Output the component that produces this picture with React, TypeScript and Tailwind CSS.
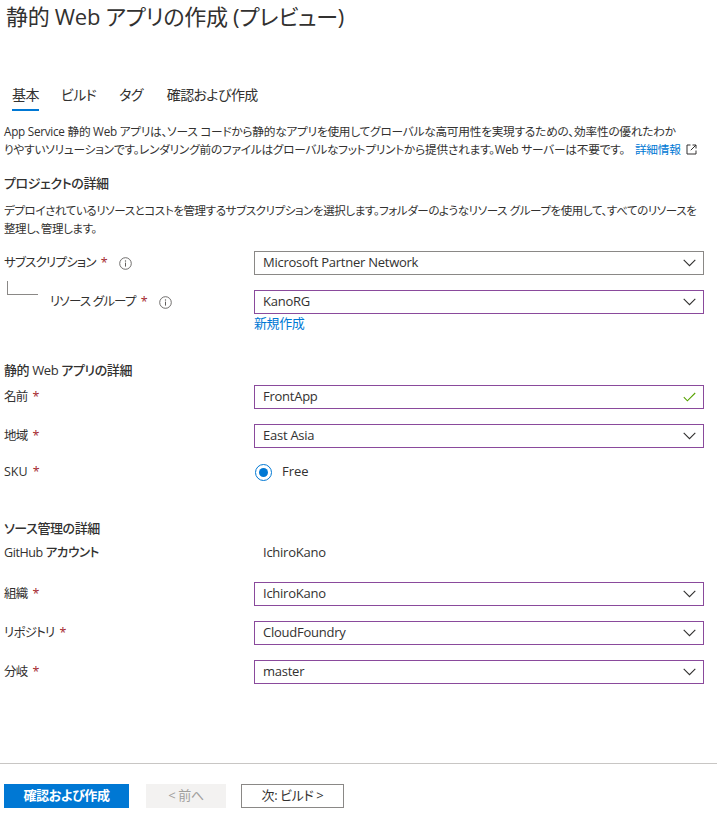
import React from "react";

const FONT = "font-['Segoe_UI','Open_Sans','Noto_Sans_CJK_JP',sans-serif] [font-feature-settings:'palt']";

function Chevron() {
  return (
    <svg width="13" height="8" viewBox="0 0 13 8" className="shrink-0">
      <path d="M0.7 0.9 L6.5 6.7 L12.3 0.9" fill="none" stroke="#323130" strokeWidth="1.1" />
    </svg>
  );
}

function Check() {
  return (
    <svg width="13" height="10" viewBox="0 0 13 10" className="shrink-0">
      <path d="M0.8 5.2 L4.4 8.8 L12.2 1" fill="none" stroke="#57a300" strokeWidth="1.1" />
    </svg>
  );
}

function InfoIcon() {
  return (
    <svg width="13" height="13" viewBox="0 0 13 13" className="shrink-0">
      <circle cx="6.5" cy="6.5" r="5.8" fill="none" stroke="#605e5c" strokeWidth="0.9" />
      <circle cx="6.5" cy="4" r="0.7" fill="#605e5c" />
      <path d="M6.5 5.6 V9.6" stroke="#605e5c" strokeWidth="1" />
    </svg>
  );
}

function ExternalIcon() {
  return (
    <svg width="11" height="11" viewBox="0 0 11 11" className="inline-block align-[-1px] ml-[5px]">
      <path d="M4.5 1 H1 V10 H10 V6.5" fill="none" stroke="#323130" strokeWidth="1" />
      <path d="M6.5 1 H10 V4.5 M10 1 L4.8 6.2" fill="none" stroke="#323130" strokeWidth="1" />
    </svg>
  );
}

function Star() {
  return <span className="text-[#a4262c] ml-[5px] tracking-normal">*</span>;
}

function Field({
  value,
  purple = true,
  icon = "chevron",
}: {
  value: string;
  purple?: boolean;
  icon?: "chevron" | "check";
}) {
  return (
    <div
      className={`w-[450px] h-[24px] flex items-center justify-between pl-[8px] pr-[7px] border ${
        purple ? "border-[#8a4a9c]" : "border-[#8a8886]"
      } bg-white text-[13px] tracking-[-0.25px] text-[#323130]`}
    >
      <span>{value}</span>
      {icon === "chevron" ? <Chevron /> : <Check />}
    </div>
  );
}

function Row({
  label,
  children,
  className = "",
}: {
  label: React.ReactNode;
  children: React.ReactNode;
  className?: string;
}) {
  return (
    <div className={`flex items-center ${className}`}>
      <div className="w-[250px] flex items-center text-[12.5px] tracking-[-0.8px] text-[#323130]">{label}</div>
      {children}
    </div>
  );
}

export default function App() {
  return (
    <div className={`${FONT} w-[717px] h-[816px] bg-white text-[#323130] pl-[4px] overflow-hidden`}>
      <h1 className="text-[22px] leading-[32px] font-normal pl-[2px] tracking-[-0.3px] text-[#323130]">
        静的 Web アプリの作成 (プレビュー)
      </h1>

      {/* tabs */}
      <div className="flex mt-[53px] pl-[8px] text-[14px] leading-[20px] tracking-[-0.6px]">
        <div className="flex flex-col">
          <span>基本</span>
          <span className="mt-[4px] h-[2px] bg-[#0078d4]" />
        </div>
        <span className="ml-[22px]">ビルド</span>
        <span className="ml-[23px]">タグ</span>
        <span className="ml-[24px]">確認および作成</span>
      </div>

      <p className="mt-[11px] text-[11.7px] leading-[18px] tracking-[-0.25px] whitespace-nowrap">
        App Service 静的 Web アプリは、ソース コードから静的なアプリを使用してグローバルな高可用性を実現するための、効率性の優れたわか
        <br />
        りやすいソリューションです。レンダリング前のファイルはグローバルなフットプリントから提供されます。Web サーバーは不要です。
        <span className="ml-[10px] text-[#0078d4]">詳細情報</span>
        <ExternalIcon />
      </p>

      <h2 className="mt-[15px] text-[13px] leading-[20px] font-medium tracking-[-0.4px]">プロジェクトの詳細</h2>
      <p className="mt-[9px] text-[11.5px] leading-[18px] tracking-[-0.4px] whitespace-nowrap">
        デプロイされているリソースとコストを管理するサブスクリプションを選択します。フォルダーのようなリソース グループを使用して、すべてのリソースを
        <br />
        整理し、管理します。
      </p>

      <Row
        className="mt-[13px]"
        label={
          <>
            <span>サブスクリプション</span>
            <Star />
            <span className="ml-[11px] flex">
              <InfoIcon />
            </span>
          </>
        }
      >
        <Field value="Microsoft Partner Network" purple={false} />
      </Row>

      <Row
        className="mt-[15px]"
        label={
          <>
            <span className="self-start -mt-[12px] ml-[3px] w-[31px] h-[14px] border-l border-b border-[#8a8886]" />
            <span className="ml-[12px]">リソース グループ</span>
            <Star />
            <span className="ml-[11px] flex">
              <InfoIcon />
            </span>
          </>
        }
      >
        <Field value="KanoRG" />
      </Row>
      <div className="pl-[250px] text-[13px] leading-[18px] tracking-[-0.4px] text-[#0078d4]">新規作成</div>

      <h2 className="mt-[28px] text-[13px] leading-[20px] font-medium tracking-[-0.4px]">静的 Web アプリの詳細</h2>
      <Row
        className="mt-[5px]"
        label={
          <>
            <span>名前</span>
            <Star />
          </>
        }
      >
        <Field value="FrontApp" icon="check" />
      </Row>
      <Row
        className="mt-[15px]"
        label={
          <>
            <span>地域</span>
            <Star />
          </>
        }
      >
        <Field value="East Asia" />
      </Row>
      <Row
        className="mt-[12px] h-[24px]"
        label={
          <>
            <span className="font-medium tracking-normal">SKU</span>
            <Star />
          </>
        }
      >
        <div className="flex items-center ml-[1px] text-[13px]">
          <span className="w-[17px] h-[17px] rounded-full border border-[#0078d4] flex items-center justify-center">
            <span className="w-[9px] h-[9px] rounded-full bg-[#0078d4]" />
          </span>
          <span className="ml-[10px]">Free</span>
        </div>
      </Row>

      <h2 className="mt-[34px] text-[13px] leading-[20px] font-medium tracking-[-0.4px]">ソース管理の詳細</h2>
      <Row className="mt-[5px] h-[20px]" label={<span className="font-medium tracking-[-0.4px]">GitHub アカウント</span>}>
        <span className="pl-[9px] text-[13px] tracking-[-0.25px]">IchiroKano</span>
      </Row>
      <Row
        className="mt-[19px]"
        label={
          <>
            <span>組織</span>
            <Star />
          </>
        }
      >
        <Field value="IchiroKano" />
      </Row>
      <Row
        className="mt-[15px]"
        label={
          <>
            <span>リポジトリ</span>
            <Star />
          </>
        }
      >
        <Field value="CloudFoundry" />
      </Row>
      <Row
        className="mt-[15px]"
        label={
          <>
            <span>分岐</span>
            <Star />
          </>
        }
      >
        <Field value="master" />
      </Row>

      {/* footer */}
      <div className="mt-[79px] -ml-[4px] h-px bg-[#c8c6c4]" />
      <div className="flex items-center mt-[20px] text-[13px] tracking-[-0.4px]">
        <button className="w-[125px] h-[24px] bg-[#0078d4] text-white font-semibold">確認および作成</button>
        <button className="ml-[17px] w-[80px] h-[24px] bg-[#f3f2f1] text-[#a19f9d]">&lt; 前へ</button>
        <button className="ml-[15px] w-[103px] h-[24px] bg-white border border-[#8a8886] text-[#323130]">
          次: ビルド &gt;
        </button>
      </div>
    </div>
  );
}
